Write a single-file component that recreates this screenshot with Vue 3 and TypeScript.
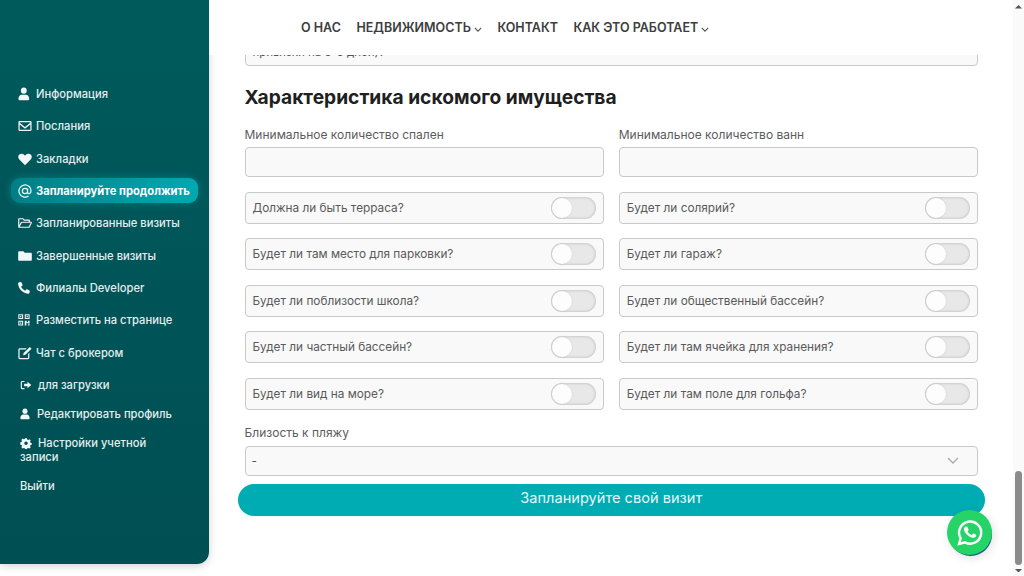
<script setup lang="ts">
interface Item { label: string; icon: string; active?: boolean; cls?: string }
const items: Item[] = [
  { label: 'Информация', icon: 'user' },
  { label: 'Послания', icon: 'mail' },
  { label: 'Закладки', icon: 'heart' },
  { label: 'Запланируйте продолжить', icon: 'at', active: true },
  { label: 'Запланированные визиты', icon: 'open' },
  { label: 'Завершенные визиты', icon: 'folder' },
  { label: 'Филиалы Developer', icon: 'phone' },
  { label: 'Разместить на странице', icon: 'qr' },
  { label: 'Чат с брокером', icon: 'edit' },
  { label: 'для загрузки', icon: 'out', cls: 'tight t-load' },
  { label: 'Редактировать профиль', icon: 'user2', cls: 'tight t-prof' },
]
const toggles: string[] = [
  'Должна ли быть терраса?', 'Будет ли солярий?',
  'Будет ли там место для парковки?', 'Будет ли гараж?',
  'Будет ли поблизости школа?', 'Будет ли общественный бассейн?',
  'Будет ли частный бассейн?', 'Будет ли там ячейка для хранения?',
  'Будет ли вид на море?', 'Будет ли там поле для гольфа?',
]
</script>

<template>
  <div class="page">
    <aside class="side">
      <nav class="menu">
        <a v-for="it in items" :key="it.label" class="item" :class="[{ active: it.active }, it.cls]">
          <svg class="ico" viewBox="0 0 16 16" fill="currentColor">
            <g v-if="it.icon === 'user' || it.icon === 'user2'" transform="scale(.95 1)">
              <circle cx="7" cy="4.200" r="3.500" />
              <path d="M1.800 15c-.8 0-1.300-.4-1.300-1.200 0-3 1.800-5 4-5h5c2.200 0 4 2 4 5 0 .8-.5 1.200-1.300 1.200z" />
            </g>
            <path v-else-if="it.icon === 'mail'" d="M1.800 2.300h12.400c.7 0 1.300.6 1.300 1.300v8.800c0 .7-.6 1.300-1.300 1.300H1.800c-.7 0-1.300-.6-1.300-1.300V3.600c0-.7.6-1.300 1.300-1.300zM1.900 3.700v.7l6.100 4.800 6.100-4.800v-.7zM14.100 6.200 8 11 1.900 6.200v6.100h12.200z" fill-rule="evenodd" />
            <path v-else-if="it.icon === 'heart'" d="M8 15 1.500 8.500C-.3 6.600 0 3.800 1.900 2.700 3.700 1.600 6.300 2 8 4.200 9.700 2 12.300 1.600 14.100 2.700 16 3.800 16.300 6.600 14.500 8.500z" />
            <path v-else-if="it.icon === 'at'" fill="none" stroke="currentColor" stroke-width="1.400" d="M11 8a3 3 0 1 1-6 0 3 3 0 0 1 6 0zm0-3v4.500c0 2.500 3.900 2 3.900-1.500A6.900 6.900 0 1 0 12 13.600" />
            <path v-else-if="it.icon === 'open'" fill-rule="evenodd" d="M1.500 2.500h4.300l1.600 1.600h5c.8 0 1.300.6 1.300 1.300V6.500h1c.900 0 1.400.9 1 1.700l-2.300 4.700c-.2.400-.6.600-1 .6H1.500C.7 13.500.2 13 .2 12.200V3.800c0-.8.500-1.300 1.300-1.300zM1.500 3.800v6.700l1.600-3.300c.2-.4.600-.7 1.100-.7h8.100V5.400H6.900L5.300 3.800zM4.400 7.800l-2.500 4.400h10.300l2.400-4.400z" />
            <path v-else-if="it.icon === 'folder'" d="M1.500 2.500h4.600l1.700 1.700h6.700c.8 0 1.300.5 1.300 1.300v6.700c0 .8-.5 1.300-1.300 1.300H1.500C.7 13.500.200 13 .200 12.200V3.800c0-.8.500-1.300 1.300-1.300z" />
            <path v-else-if="it.icon === 'phone'" d="M3.800.8 1.300 1.500C.9 1.600.6 2 .6 2.400.6 9.300 6.700 15.400 13.600 15.400c.4 0 .8-.3.9-.7l.7-2.500c.1-.4-.1-.8-.5-1l-3-1.300c-.3-.2-.7-.1-1 .2l-1.300 1.600C7.500 10.600 5.400 8.500 4.300 6.600l1.600-1.300c.3-.3.4-.7.2-1L4.800 1.300c-.2-.4-.6-.6-1-.5z" transform="scale(.92) translate(-.5 .5)" />
            <g v-else-if="it.icon === 'qr'" transform="scale(.92) translate(-.6 .5)">
              <path fill-rule="evenodd" d="M1 1h6v6H1zM2.300 2.300v3.400h3.400V2.300zM9 1h6v6H9zM10.300 2.300v3.400h3.400V2.300zM1 9h6v6H1zM2.300 10.300v3.400h3.400v-3.400zM3.200 3.200h1.600v1.600H3.200zM11.200 3.200h1.600v1.600h-1.600zM3.200 11.200h1.600v1.600H3.200z" />
              <path d="M9 9h2.400v1.800h1.600V9h2v3.600h-2.400v-.9h-1.600V15H9zM13 13.400h2V15h-2z" />
            </g>
            <path v-else-if="it.icon === 'edit'" fill-rule="evenodd" d="M2 2.500h8L8.600 3.900H2.300c-.3 0-.5.2-.5.500v8.800c0 .3.2.5.5.5h8.800c.3 0 .5-.2.500-.5V9l1.400-1.400v5.800c0 .9-.7 1.600-1.600 1.600H2C1.100 15 .4 14.300 .4 13.400V4.100C.4 3.200 1.100 2.500 2 2.500zM13.500 1l2 2-7 7-2.700.6.600-2.600z" />
            <path v-else-if="it.icon === 'out'" fill-rule="evenodd" d="M6 2.500v1.500H3.200c-.4 0-.7.300-.7.700v6.600c0 .4.300.7.700.7H6v1.500H3c-1.100 0-2-.9-2-2V4.500c0-1.100.9-2 2-2zM10 3.800l5 4.200-5 4.200V9.700H5.500V6.300H10z" />
          </svg>
          <span>{{ it.label }}</span>
        </a>
        <a class="item wrap">
          <svg class="ico" viewBox="0 0 16 16" fill="currentColor">
            <path fill-rule="evenodd" d="M6.600.8h2.800l.4 2 1.500.7 1.800-1 2 2-1 1.800.6 1.500 2 .4v2.800l-2 .4-.6 1.500 1 1.800-2 2-1.800-1-1.500.6-.4 2H6.600l-.4-2-1.500-.6-1.800 1-2-2 1-1.800-.6-1.500-2-.4V7.200l2-.4.6-1.500-1-1.800 2-2 1.800 1 1.500-.7zM8 5.800a2.700 2.700 0 1 0 0 5.400 2.700 2.700 0 0 0 0-5.400z" transform="translate(1 .8) scale(.88)" />
          </svg>
          <span>Настройки учетной записи</span>
        </a>
        <a class="item plain"><span>Выйти</span></a>
      </nav>
    </aside>

    <main class="main">
      <header class="top">
        <a class="link">О НАС</a>
        <a class="link">НЕДВИЖИМОСТЬ <svg class="chev" viewBox="0 0 10 6"><path d="M1 1l4 4 4-4" /></svg></a>
        <a class="link">КОНТАКТ</a>
        <a class="link">КАК ЭТО РАБОТАЕТ <svg class="chev" viewBox="0 0 10 6"><path d="M1 1l4 4 4-4" /></svg></a>
      </header>

      <div class="content">
        <div class="clip">
          <div class="prev"><span>привязки на 3-5 дней)?</span></div>
        </div>

        <h2 class="title">Характеристика искомого имущества</h2>

        <div class="fields">
          <label class="field">
            <span class="lab">Минимальное количество спален</span>
            <span class="input"></span>
          </label>
          <label class="field">
            <span class="lab">Минимальное количество ванн</span>
            <span class="input"></span>
          </label>
        </div>

        <div class="toggles">
          <div v-for="t in toggles" :key="t" class="row">
            <span>{{ t }}</span>
            <span class="switch"><i class="knob"></i></span>
          </div>
        </div>

        <div class="beach">
          <span class="lab">Близость к пляжу</span>
          <div class="select">
            <span>-</span>
            <svg class="sel-chev" viewBox="0 0 12 7"><path d="M1 1l5 5 5-5" /></svg>
          </div>
        </div>

        <button class="cta" type="button">Запланируйте свой визит</button>
      </div>
    </main>

    <div class="scrollbar">
      <svg class="arrow up" viewBox="0 0 8 4"><path d="M0 4h8L4 0z" /></svg>
      <div class="thumb"></div>
      <svg class="arrow" viewBox="0 0 8 4"><path d="M0 0h8L4 4z" /></svg>
    </div>

    <a class="wa">
      <svg viewBox="0 0 32 32" width="30" height="30">
        <path fill="none" stroke="#fff" stroke-width="2.600" d="M4.300 27.700l1.700-6.100A11.800 11.800 0 1 1 10.600 26z" />
        <path fill="#fff" d="M12 9.200c-.3 0-.8.100-1.200.6-.5.500-1.500 1.400-1.500 3.400s1.500 4 1.700 4.200c.2.300 2.900 4.500 7.100 6.100 3.500 1.300 4.200 1.100 5 1 .8-.1 2.400-1 2.700-1.900.3-.9.300-1.700.2-1.900-.1-.2-.4-.3-.8-.5l-2.700-1.300c-.4-.1-.6-.2-.9.200l-1.200 1.500c-.2.300-.4.300-.8.100-.4-.2-1.600-.6-3.100-1.900-1.100-1-1.900-2.300-2.100-2.600-.2-.4 0-.6.200-.8l.6-.7c.2-.2.300-.4.400-.6.100-.3.100-.5 0-.7l-1.200-3c-.3-.8-.7-.7-.9-.7z" transform="translate(2.300 1.900) scale(.78)" />
      </svg>
    </a>
  </div>
</template>

<style scoped>
.page {
  position: relative;
  display: flex;
  width: 1024px;
  height: 576px;
  overflow: hidden;
  background: #fff;
  font-family: "Inter", "Noto Sans", "DejaVu Sans", sans-serif;
  color: #555;
}
.side {
  flex: none;
  width: 209px;
  height: 564px;
  box-sizing: border-box;
  padding-top: 78px;
  background: linear-gradient(180deg, #005a5c 0%, #004f53 100%);
  border-bottom-right-radius: 12px;
  box-shadow: 0 2px 8px rgba(0, 0, 0, .18);
  color: #e4eeee;
}
.menu { display: flex; flex-direction: column; }
.item {
  display: flex;
  align-items: center;
  gap: 4px;
  height: 32.300px;
  padding-left: 18px;
  font-size: 11.200px;
  font-weight: 500;
  white-space: nowrap;
}
.ico { flex: none; width: 14px; height: 14px; color: #f2f7f7; }
.active { position: relative; z-index: 1; height: 25px; margin: 3.600px 11px 3.700px; padding-left: 7px; border-radius: 9px; background: linear-gradient(90deg, #007f85, #00a9b1); box-shadow: 0 0 9px rgba(0, 170, 178, .45); color: #fff; font-weight: 700; }
.tight { gap: 6px; padding-left: 20px; }
.tight .ico { width: 12px; height: 12px; }
.t-load { height: 32px; }
.t-prof { height: 27px; gap: 5px; }
.wrap { display: block; height: auto; padding: 9.500px 40px 7.500px 20px; white-space: normal; line-height: 13.500px; }
.wrap .ico { display: inline-block; vertical-align: -2px; margin-right: 6px; width: 12px; height: 12px; }
.plain { padding-left: 20px; height: 29px; }

.main { flex: 1; min-width: 0; display: flex; flex-direction: column; }
.top {
  flex: none;
  height: 55px;
  box-sizing: border-box;
  display: flex;
  align-items: center;
  gap: 15.500px;
  padding-left: 92px;
  background: #fff;
  font-size: 12.500px;
  font-weight: 600;
  color: #3d3d3d;
}
.link { display: inline-flex; align-items: center; gap: 3px; white-space: nowrap; }
.chev { width: 8px; height: 5px; margin-top: 3px; fill: none; stroke: #555; stroke-width: 1.400; }

.content { display: flex; flex-direction: column; padding: 0 35px 0 35.500px; }
.clip { height: 11px; overflow: hidden; display: flex; flex-direction: column; justify-content: flex-end; }
.prev {
  flex: none;
  height: 31px;
  box-sizing: border-box;
  padding: 9px 7px 0;
  border: 1px solid #c9c9c9;
  border-radius: 4px;
  background: #f9f9f9;
  font-size: 11.500px;
  color: #555;
}
.title { margin: 20px 0 0; height: 23px; font-size: 19.200px; line-height: 23px; font-weight: 700; color: #1f1f1f; }
.fields { display: grid; grid-template-columns: 1fr 1fr; gap: 15px; margin-top: 19px; }
.field { display: flex; flex-direction: column; }
.lab { font-size: 12px; line-height: 14px; color: #5c5c5c; }
.input { height: 30px; box-sizing: border-box; margin-top: 5px; border: 1px solid #c9c9c9; border-radius: 4px; background: #f9f9f9; }
.toggles { display: grid; grid-template-columns: 1fr 1fr; column-gap: 15px; row-gap: 14.500px; margin-top: 14.600px; }
.row {
  height: 32px;
  box-sizing: border-box;
  display: flex;
  align-items: center;
  justify-content: space-between;
  padding: 0 7px;
  border: 1px solid #c9c9c9;
  border-radius: 4px;
  background: #f9f9f9;
  font-size: 11.800px;
  color: #5a5a5a;
}
.switch { position: relative; width: 45px; height: 22px; box-sizing: border-box; border-radius: 11px; background: #e8e8e8; box-shadow: inset 0 0 3px rgba(0, 0, 0, .25); }
.knob { position: absolute; left: 1px; top: 1px; width: 20px; height: 20px; border-radius: 50%; background: #fdfdfd; box-shadow: 0 0 2px rgba(0, 0, 0, .12); }
.beach { margin-top: 16.400px; display: flex; flex-direction: column; }
.select {
  height: 30px;
  box-sizing: border-box;
  margin-top: 6px;
  display: flex;
  align-items: center;
  justify-content: space-between;
  padding: 0 18px 0 6px;
  border: 1px solid #c9c9c9;
  border-radius: 4px;
  background: #f9f9f9;
  font-size: 11.800px;
}
.sel-chev { width: 12px; height: 7px; fill: none; stroke: #aaa; stroke-width: 1.400; }
.cta {
  height: 32px;
  margin: 8px -7px 0;
  padding: 0 0 3px;
  border: none;
  border-radius: 16px;
  background: #00acb3;
  color: #e6f7f7;
  font-family: inherit;
  font-size: 14.600px;
  font-weight: 400;
}
.scrollbar { flex: none; width: 11px; display: flex; flex-direction: column; align-items: center; padding: 5px 2px 0; box-sizing: border-box; background: #fafafa; }
.thumb { flex: none; width: 7px; height: 94px; margin-top: auto; border-radius: 4px; background: #8b8b8b; }
.arrow { flex: none; width: 7px; height: 3.500px; margin: 4px 0; fill: #555; }
.up { margin: 0; }
.wa {
  position: absolute;
  left: 947px;
  top: 510px;
  width: 45px;
  height: 45px;
  display: flex;
  align-items: center;
  justify-content: center;
  border-radius: 50%;
  background: #25d366;
  box-shadow: 2px 3px 10px rgba(0, 0, 0, .12), 1px 2px 0 -1px #0b5f8a;
}
</style>
